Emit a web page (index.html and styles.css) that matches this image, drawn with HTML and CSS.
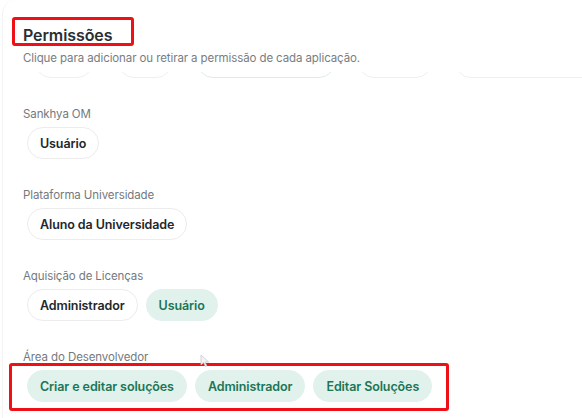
FILE: index.html
```html
<!DOCTYPE html>
<html lang="pt-BR">
<head>
<meta charset="utf-8">
<title>Permissões</title>
<link rel="stylesheet" href="styles.css">
</head>
<body>
<div class="card">
  <header class="header">
    <h1 class="title">Permissões</h1>
    <p class="subtitle">Clique para adicionar ou retirar a permissão de cada aplicação.</p>
    <div class="ghost-row">
      <span class="chip ghost g1"></span>
      <span class="chip ghost g2"></span>
      <span class="chip ghost g3"></span>
      <span class="chip ghost g4"></span>
      <span class="chip ghost g5"></span>
    </div>
  </header>

  <section class="app">
    <div class="app-label">Sankhya OM</div>
    <div class="chips">
      <span class="chip">Usuário</span>
    </div>
  </section>

  <section class="app">
    <div class="app-label">Plataforma Universidade</div>
    <div class="chips">
      <span class="chip">Aluno da Universidade</span>
    </div>
  </section>

  <section class="app">
    <div class="app-label">Aquisição de Licenças</div>
    <div class="chips">
      <span class="chip">Administrador</span>
      <span class="chip active">Usuário</span>
    </div>
  </section>

  <section class="app">
    <div class="app-label">Área do Desenvolvedor</div>
    <div class="chips">
      <span class="chip active">Criar e editar soluções</span>
      <span class="chip active">Administrador</span>
      <span class="chip active">Editar Soluções</span>
    </div>
  </section>

  <div class="mark mark-title"></div>
  <div class="mark mark-dev"></div>
  <svg class="cursor" width="10" height="14" viewBox="0 0 10 14"><path d="M1 1 L1 11 L3.6 8.6 L5.4 12.6 L6.8 12 L5 8 L8.6 8 Z" fill="#f4f4f4" stroke="#c9c9c9" stroke-width="0.8"/></svg>
</div>
</body>
</html>
```

FILE: styles.css
```css
* { box-sizing: border-box; }

html, body {
  margin: 0;
  padding: 0;
  background: #ffffff;
}

body {
  font-family: Inter, "Noto Sans", "Liberation Sans", sans-serif;
  color: #2b2f33;
  width: 582px;
  height: 418px;
  overflow: hidden;
}

.card {
  position: relative;
  height: 418px;
  padding: 0 0 0 20px;
  border-left: 1px solid #f3f3f3;
  border-top-left-radius: 14px;
  margin-left: 2px;
}

.header {
  padding-top: 25px;
}

.title {
  margin: 0;
  font-size: 16px;
  line-height: 20px;
  font-weight: 600;
  color: #2a2e32;
  letter-spacing: -0.1px;
}

.subtitle {
  margin: 5px 0 0;
  font-size: 11.5px;
  line-height: 16px;
  color: #787d82;
  letter-spacing: -0.1px;
}

.ghost-row {
  display: flex;
  align-items: flex-end;
  height: 6px;
  margin-top: 6px;
  overflow: hidden;
  margin-left: 12px;
}

.chip.ghost {
  flex: none;
  height: 32px;
  padding: 0;
  border-color: #efefef;
  background: #ffffff;
}

.g1 { width: 58px; margin-right: 25px; }
.g2 { width: 54px; margin-right: 25px; }
.chip.g3 { width: 138px; margin-right: 23px; border-color: #dcede6; }
.g4 { width: 74px; margin-right: 23px; }
.g5 { width: 160px; }

.app {
  padding-top: 28px;
}

.app-label {
  font-size: 11.5px;
  line-height: 16px;
  color: #74797e;
  letter-spacing: -0.1px;
}

.chips {
  display: flex;
  gap: 8px;
  margin-top: 5px;
  margin-left: 4px;
}

.chip {
  display: inline-flex;
  align-items: center;
  height: 32px;
  padding: 0 12px;
  border: 1px solid #ececec;
  border-radius: 16px;
  background: #ffffff;
  font-size: 12.5px;
  font-weight: 600;
  color: #23272b;
  letter-spacing: -0.1px;
  white-space: nowrap;
}

.chip.active {
  background: #e1f1eb;
  border-color: #e1f1eb;
  color: #1b7656;
}

.mark {
  position: absolute;
  border: 3px solid #ee0f17;
  border-radius: 3px;
}

.mark-title {
  left: 9px;
  top: 17px;
  width: 122px;
  height: 29px;
}

.mark-dev {
  left: 6px;
  top: 363px;
  width: 440px;
  height: 48px;
}

.cursor {
  position: absolute;
  left: 197px;
  top: 354px;
}
```
